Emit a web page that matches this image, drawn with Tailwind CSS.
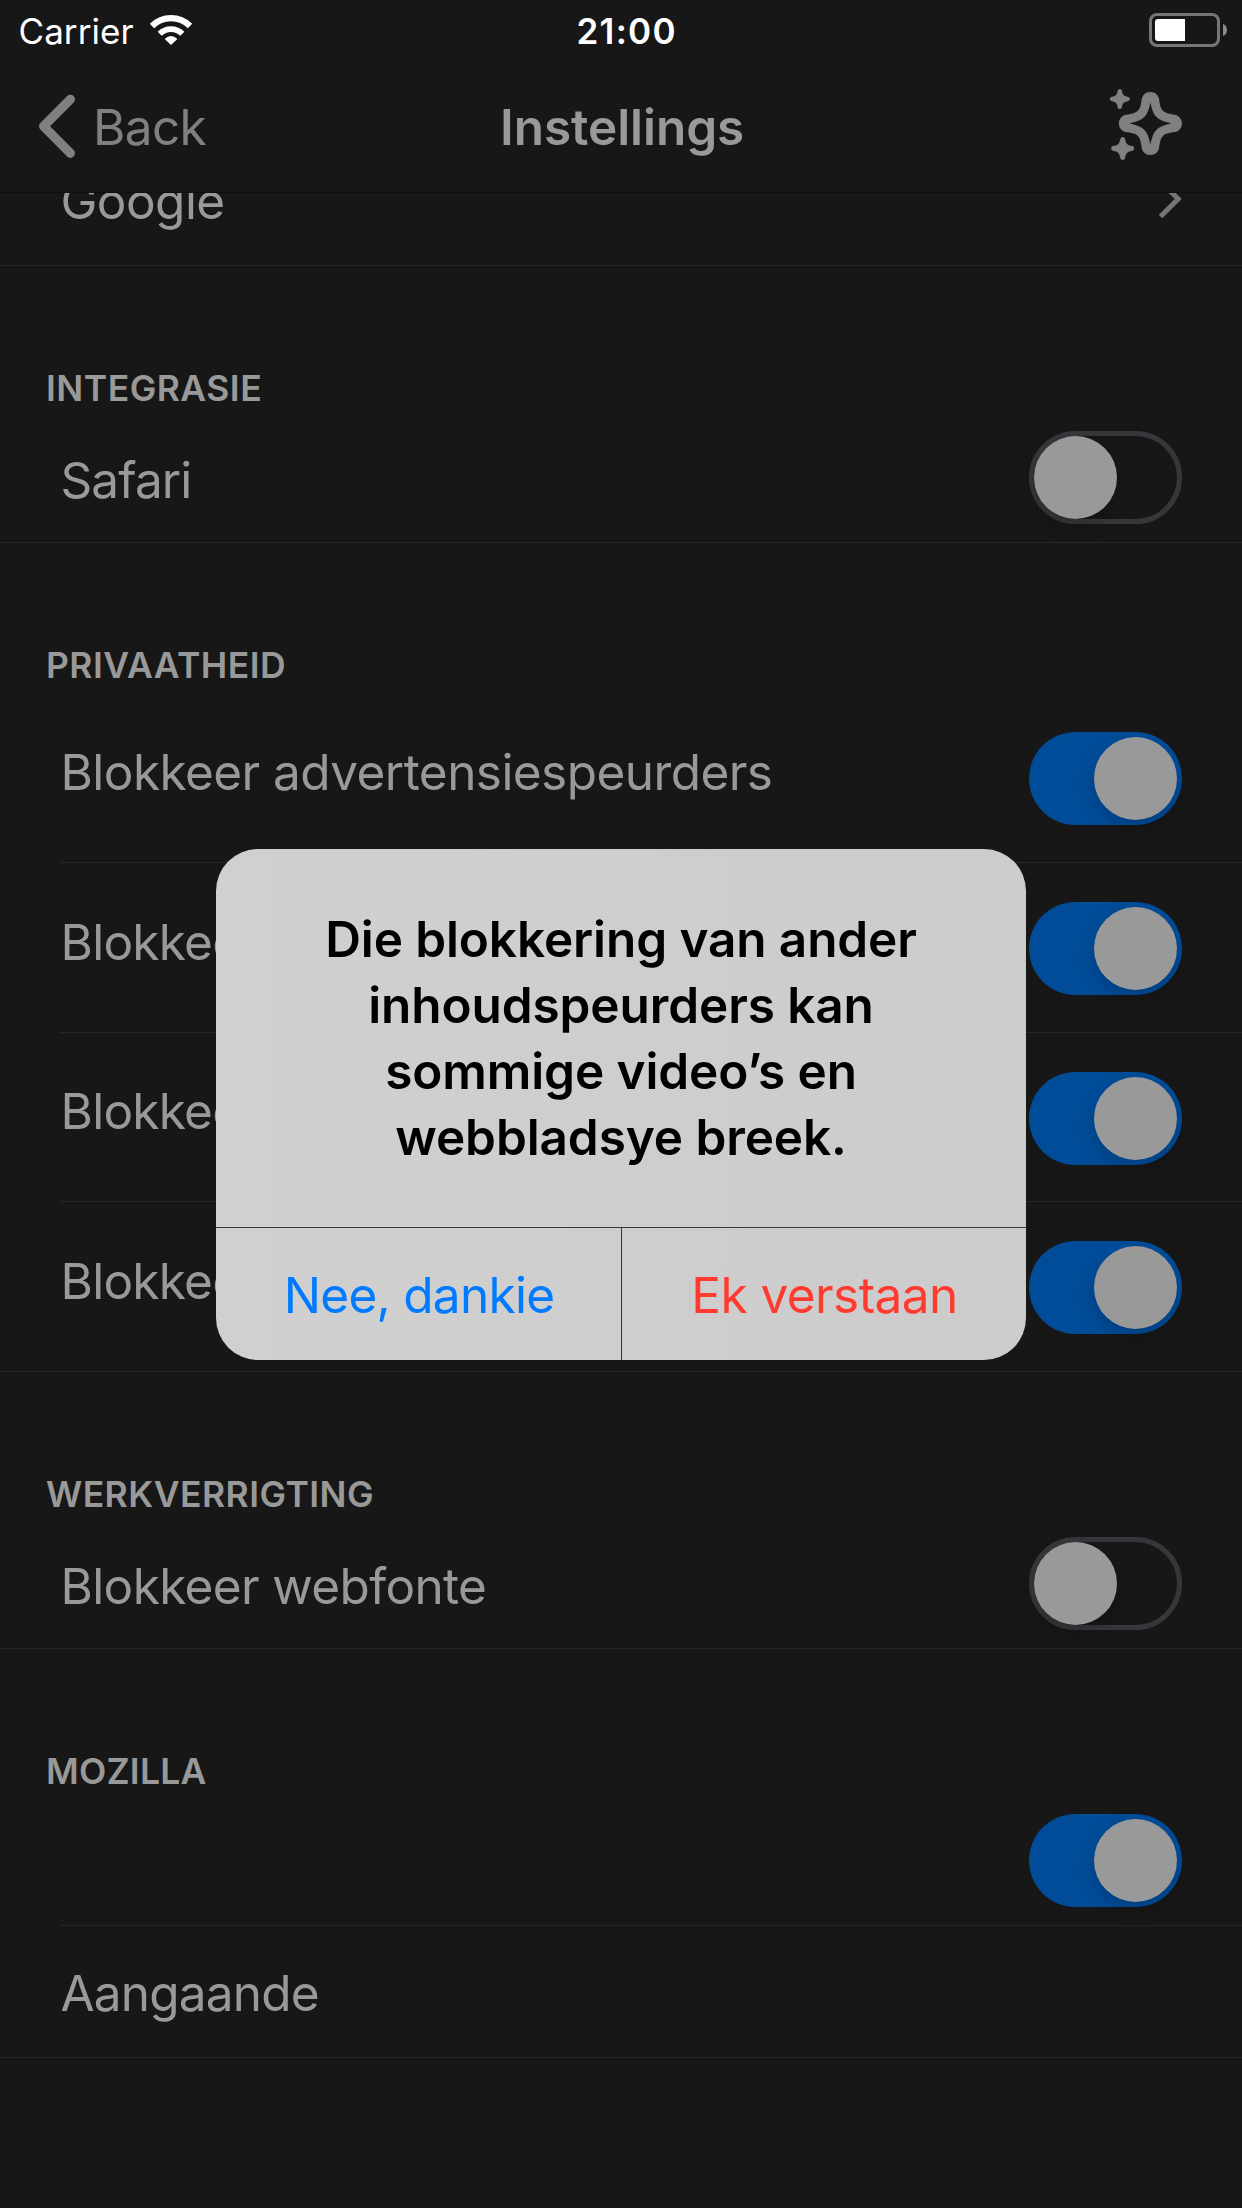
<!DOCTYPE html>
<html lang="af">
<head>
<meta charset="utf-8">
<title>Instellings</title>
<script src="https://cdn.jsdelivr.net/npm/@tailwindcss/browser@4"></script>
</head>
<body class="bg-[#171717]">
<div class="relative w-[1242px] h-[2208px] overflow-hidden bg-[#171717] font-[Inter,sans-serif] text-[49.5px] leading-[60px] tracking-[-0.56px] text-[#999999]">

  <header class="flex h-[193px] flex-col border-b border-[#0f0f0f]">
    <!-- Status bar -->
    <div class="flex h-[60px] items-center text-[35px] leading-[40px] text-white">
      <div class="flex w-[576.5px] items-center pl-[18.5px]">
        <span class="mt-[1px] w-[130.5px] tracking-[0.07px]">Carrier</span>
        <svg class="h-[32px] w-[44px]" viewBox="149 14 44 32" fill="none" stroke="#fff">
          <path d="M152 26A26.9 26.9 0 0 1 190 26" stroke-width="6.2"/>
          <path d="M159.7 33.7A16 16 0 0 1 182.3 33.7" stroke-width="5.8"/>
          <path d="M164.6 38.9Q171 33 177.4 38.9L171 45Z" fill="#fff" stroke="none"/>
        </svg>
      </div>
      <span class="mt-[1px] font-semibold tracking-[1.28px]">21:00</span>
      <svg class="ml-auto mr-[14px] h-[36px] w-[80px]" viewBox="1148 12 80 36">
        <rect x="1150.5" y="14.5" width="68" height="31" rx="6.5" fill="none" stroke="#767676" stroke-width="3"/>
        <path d="M1158 19H1185V41H1158Q1155 41 1155 38V22Q1155 19 1158 19Z" fill="#fff"/>
        <path d="M1223 24Q1227 25.500 1227 30T1223 36Z" fill="#8b8b8b"/>
      </svg>
    </div>
    <!-- Navigation bar -->
    <div class="flex h-[132px] items-center">
      <div class="flex w-[500px] items-center pl-[36px] text-[#808080]">
        <svg class="h-[66px] w-[57px] shrink-0" viewBox="36 93 57 66" fill="none" stroke="#808080" stroke-width="9.2" stroke-linecap="round" stroke-linejoin="round">
          <path d="M70.400 99.300L43.600 126.300L70.400 153.300"/>
        </svg>
        <span class="mt-[2px] text-[49.5px] tracking-[-0.65px]">Back</span>
      </div>
      <span class="mt-[2px] font-semibold tracking-[-0.05px]">Instellings</span>
      <svg class="ml-auto mr-[58px] h-[76px] w-[76px]" viewBox="1108 88 76 76" fill="#808080">
        <path transform="translate(1150.400 123.400)" fill-rule="evenodd" d="M0-31.500C5-31.500 8.200-28 8.700-24C10-15.500 11-14.300 12.600-12.600C14.300-11 15.500-10 24-8.700C28-8.200 31.500-5 31.500 0C31.500 5 28 8.200 24 8.700C15.500 10 14.300 11 12.600 12.600C11 14.300 10 15.500 8.700 24C8.200 28 5 31.500 0 31.500C-5 31.500-8.200 28-8.700 24C-10 15.500-11 14.300-12.600 12.600C-14.300 11-15.500 10-24 8.700C-28 8.200-31.500 5-31.500 0C-31.500-5-28-8.200-24-8.700C-15.500-10-14.300-11-12.600-12.600C-11-14.300-10-15.500-8.700-24C-8.200-28-5-31.500 0-31.500ZM0-21C2-11 4.500-8 6.300-6.300C8-4.500 11-2 21 0C11 2 8 4.500 6.300 6.300C4.500 8 2 11 0 21C-2 11-4.500 8-6.300 6.300C-8 4.500-11 2-21 0C-11-2-8-4.500-6.300-6.300C-4.500-8-2-11 0-21Z"/>
        <path transform="translate(1119.800 99)" d="M-2-8.500Q-1.700-10 0-10T2-8.500C3-4.600 3-3 8.500-2Q10-1.700 10 0T8.500 2C3 3 3 4.600 2 8.500Q1.700 10 0 10T-2 8.500C-3 4.600-3 3-8.500 2Q-10 1.700-10 0T-8.500-2C-3-3-3-4.600-2-8.500Z"/>
        <path transform="translate(1122.700 148.400) scale(1.150)" d="M-2-8.500Q-1.700-10 0-10T2-8.500C3-4.600 3-3 8.500-2Q10-1.700 10 0T8.500 2C3 3 3 4.600 2 8.500Q1.700 10 0 10T-2 8.500C-3 4.600-3 3-8.500 2Q-10 1.700-10 0T-8.500-2C-3-3-3-4.600-2-8.500Z"/>
      </svg>
    </div>
  </header>

  <main>
    <!-- Search engine row, scrolled partly under the bar -->
    <div class="flex h-[73px] items-start justify-between overflow-hidden border-b border-[#272727] pl-[60.5px] pr-[60px]">
      <span class="mt-[-22px]">Google</span>
      <svg class="mt-[-14px] h-[40px] w-[26px]" viewBox="1156 179 26 40" fill="none" stroke="#767676" stroke-width="5">
        <path d="M1160.500 181.500L1178.200 199L1160.500 216.500"/>
      </svg>
    </div>

    <section class="pt-[103px]">
      <h2 class="h-[39px] pl-[46px] text-[35.5px] font-semibold leading-[40px] tracking-[0.48px]">INTEGRASIE</h2>
      <div class="flex h-[135px] items-start justify-between border-b border-[#272727] pl-[60.5px] pr-[60px]">
        <span class="mt-[42px] tracking-[-0.9px]">Safari</span>
        <span class="mt-[23px] flex h-[93px] w-[153px] rounded-full border-[5px] border-[#35373b]"><span class="ml-[-0.5px] size-[83px] rounded-full bg-[#999999] shadow-[0_8px_18px_rgba(0,0,0,0.18)]"></span></span>
      </div>
    </section>

    <section class="pt-[103px]">
      <h2 class="mb-[8px] h-[39px] pl-[46px] text-[35.5px] font-semibold leading-[40px] tracking-[0.46px]">PRIVAATHEID</h2>
      <div class="ml-[60px] flex h-[170px] items-start justify-between border-b border-[#272727] pr-[60px]">
        <span class="ml-[0.5px] mt-[49px]">Blokkeer advertensiespeurders</span>
        <span class="mt-[39px] flex h-[93px] w-[153px] justify-end rounded-full bg-[#004c99] p-[5px]"><span class="size-[83px] rounded-full bg-[#999999] shadow-[0_8px_18px_rgba(0,0,0,0.18)]"></span></span>
      </div>
      <div class="ml-[60px] flex h-[170px] items-start justify-between border-b border-[#272727] pr-[60px]">
        <span class="ml-[0.5px] mt-[49px] tracking-[-0.75px]">Blokkeer</span>
        <span class="mt-[39px] flex h-[93px] w-[153px] justify-end rounded-full bg-[#004c99] p-[5px]"><span class="size-[83px] rounded-full bg-[#999999] shadow-[0_8px_18px_rgba(0,0,0,0.18)]"></span></span>
      </div>
      <div class="ml-[60px] flex h-[169px] items-start justify-between border-b border-[#272727] pr-[60px]">
        <span class="ml-[0.5px] mt-[48px] tracking-[-0.75px]">Blokkeer</span>
        <span class="mt-[38.5px] flex h-[93px] w-[153px] justify-end rounded-full bg-[#004c99] p-[5px]"><span class="size-[83px] rounded-full bg-[#999999] shadow-[0_8px_18px_rgba(0,0,0,0.18)]"></span></span>
      </div>
      <div class="flex h-[170px] items-start justify-between border-b border-[#272727] pl-[60.5px] pr-[60px]">
        <span class="mt-[49px] tracking-[-0.75px]">Blokkeer</span>
        <span class="mt-[39px] flex h-[93px] w-[153px] justify-end rounded-full bg-[#004c99] p-[5px]"><span class="size-[83px] rounded-full bg-[#999999] shadow-[0_8px_18px_rgba(0,0,0,0.18)]"></span></span>
      </div>
    </section>

    <section class="pt-[103px]">
      <h2 class="h-[39px] pl-[46px] text-[35.5px] font-semibold leading-[40px] tracking-[0.46px]">WERKVERRIGTING</h2>
      <div class="flex h-[135px] items-start justify-between border-b border-[#272727] pl-[60.5px] pr-[60px]">
        <span class="mt-[42px] tracking-[-0.64px]">Blokkeer webfonte</span>
        <span class="mt-[23px] flex h-[93px] w-[153px] rounded-full border-[5px] border-[#35373b]"><span class="ml-[-0.5px] size-[83px] rounded-full bg-[#999999] shadow-[0_8px_18px_rgba(0,0,0,0.18)]"></span></span>
      </div>
    </section>

    <section class="pt-[103px]">
      <h2 class="h-[39px] pl-[46px] text-[35.5px] font-semibold leading-[40px] tracking-[0.22px]">MOZILLA</h2>
      <div class="ml-[60px] flex h-[135px] items-start justify-end border-b border-[#272727] pr-[60px]">
        <span class="mt-[23px] flex h-[93px] w-[153px] justify-end rounded-full bg-[#004c99] p-[5px]"><span class="size-[83px] rounded-full bg-[#999999] shadow-[0_8px_18px_rgba(0,0,0,0.18)]"></span></span>
      </div>
      <div class="flex h-[132px] items-start border-b border-[#272727] pl-[60.5px]">
        <span class="mt-[37px] tracking-[-0.8px]">Aangaande</span>
      </div>
    </section>
  </main>

  <!-- Alert -->
  <div class="absolute left-[216px] top-[849px] flex h-[511px] w-[810px] flex-col overflow-hidden rounded-[42px] bg-linear-to-r from-[#d0d0d0] to-[#cccccc]">
    <p class="h-[378px] pt-[57px] text-center font-semibold leading-[66px] tracking-[-0.1px] text-black">Die blokkering van ander<br>inhoudspeurders kan<br>sommige video’s en<br>webbladsye breek.</p>
    <div class="flex h-[133px] border-t border-[#38383b]">
      <button class="w-[406px] border-r border-[#38383b] pl-[1px] pt-[2px] tracking-[-0.72px] text-[#007aff]">Nee, dankie</button>
      <button class="w-[404px] pl-[1px] pt-[2px] text-[#ff3b30]">Ek verstaan</button>
    </div>
  </div>
</div>
</body>
</html>
